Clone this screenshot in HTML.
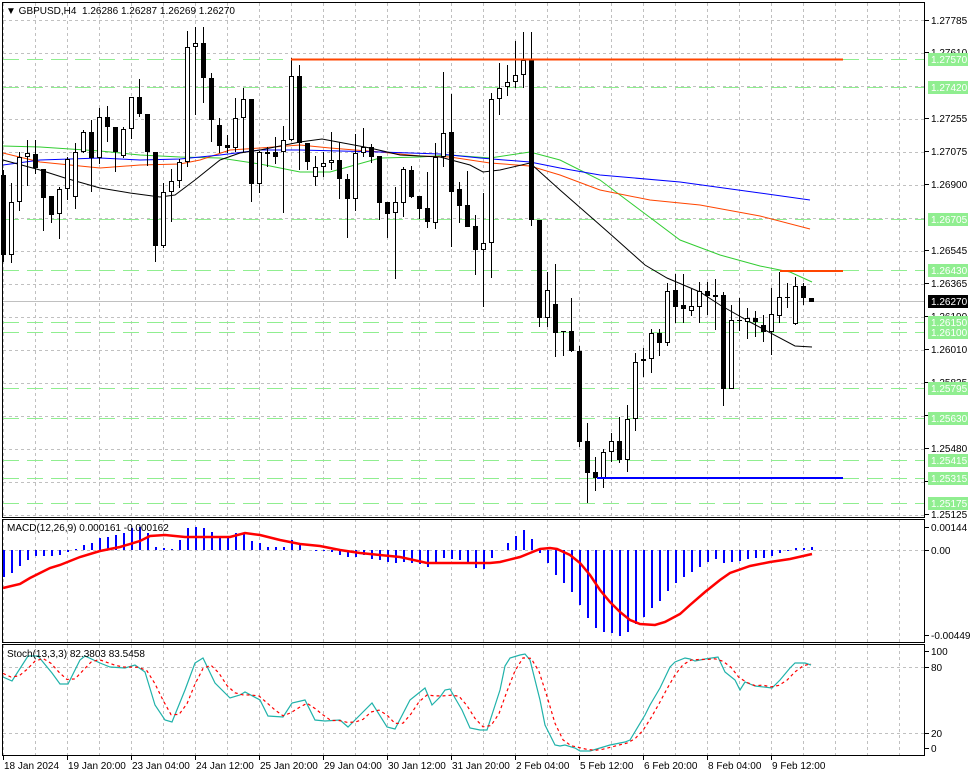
<!DOCTYPE html>
<html><head><meta charset="utf-8"><style>
html,body{margin:0;padding:0;background:#fff;width:971px;height:776px;overflow:hidden}
svg{display:block;font-family:"Liberation Sans",Tahoma,sans-serif;font-size:10px}
</style></head><body>
<svg id="s" width="971" height="776" xmlns="http://www.w3.org/2000/svg"></svg>
<script>
var S=document.getElementById('s'),o='';
function L(x1,y1,x2,y2,c,w,d){o+='<line x1="'+x1+'" y1="'+y1+'" x2="'+x2+'" y2="'+y2+'" stroke="'+c+'" stroke-width="'+(w||1)+'"'+(d?' stroke-dasharray="'+d+'"':'')+' shape-rendering="crispEdges"/>';}
function P(pts,c,w,d){o+='<polyline fill="none" points="'+pts.map(function(p){return p.join(',')}).join(' ')+'" stroke="'+c+'" stroke-width="'+(w||1)+'"'+(d?' stroke-dasharray="'+d+'"':'')+'/>';}
function T(x,y,t,c,extra){o+='<text x="'+x+'" y="'+y+'" fill="'+(c||'#000')+'" '+(extra||'')+'>'+t+'</text>';}
for(var x=3.5;x<925;x+=32){L(x,3,x,517,'#c0c0c0',1,'3,3');L(x,519,x,643,'#c0c0c0',1,'3,3');L(x,645,x,755,'#c0c0c0',1,'3,3');}
for(var y=20.5;y<517;y+=33){L(3,y,925,y,'#c0c0c0',1,'3,3');}
L(3,550.5,925,550.5,'#c0c0c0',1,'3,3');L(3,667.5,925,667.5,'#c0c0c0',1,'3,3');L(3,733.5,925,733.5,'#c0c0c0',1,'3,3');
var G=[[59,'1.27570'],[87,'1.27420'],[219,'1.26705'],[270,'1.26430'],[322,'1.26150'],[332,'1.26100'],[388,'1.25795'],[418,'1.25630'],[460,'1.25415'],[478,'1.25315'],[503,'1.25175']];
G.forEach(function(g){L(3,g[0]+.5,925,g[0]+.5,'#90ee90',1,'16,8');});
L(3,301.5,925,301.5,'#c0c0c0',1);
P([[3,146],[40,147],[100,151],[140,155],[180,157],[220,158],[260,164],[300,172],[330,172],[380,158],[420,157],[450,155],[490,158],[530,152],[560,160],[600,180],[640,210],[680,240],[720,255],[760,266],[790,272],[812,282]],'#32cd32');
P([[3,153],[40,162],[100,168],[140,165],[180,164],[200,160],[230,150],[260,148],[300,145],[330,148],[380,152],[420,156],[450,157],[490,163],[530,166],[560,175],[600,190],[650,200],[700,205],[760,216],[810,229]],'#ff4500');
P([[3,165],[40,160],[100,158],[140,160],[180,159],[220,155],[260,150],[300,150],[380,152],[440,154],[480,158],[530,162],[560,168],[600,175],[680,182],[760,193],[810,200]],'#0000ff');
P([[3,160],[40,170],[65,178],[100,188],[130,193],[160,197],[175,195],[195,180],[220,160],[240,153],[260,150],[300,142],[322,139],[370,148],[400,155],[440,157],[470,165],[483,172],[500,170],[530,163],[560,190],[600,225],[617,240],[645,265],[667,278],[700,292],[720,305],[750,322],[795,346],[812,347]],'#000');
var C=[[175,255,170,262,0],[202,255,183,263,1],[157,202,152,211,1],[153,157,140,186,1],[154,168,140,174,0],[169,198,169,231,0],[196,215,196,223,0],[189,214,187,239,1],[159,189,157,200,1],[152,197,143,209,1],[132,152,130,153,1],[132,158,120,192,0],[117,158,108,164,1],[117,127,106,142,0],[127,152,127,172,0],[129,156,127,158,1],[97,129,97,139,1],[97,114,79,117,0],[114,152,114,166,0],[152,246,152,262,0],[192,246,183,248,1],[181,192,169,222,1],[162,181,159,188,1],[47,162,31,167,1],[43,47,27,115,1],[43,78,27,103,0],[78,120,73,142,0],[125,146,118,153,0],[145,148,135,153,0],[118,148,98,152,1],[99,118,88,152,1],[99,184,99,202,0],[152,184,151,193,1],[152,154,147,167,1],[152,157,137,164,0],[140,152,126,213,1],[76,140,58,141,1],[76,143,65,170,0],[143,162,143,170,0],[167,177,156,186,1],[163,167,152,177,1],[160,163,132,170,1],[160,179,142,199,0],[179,199,174,238,0],[153,199,134,211,1],[147,153,128,157,1],[147,157,144,163,0],[156,203,156,220,0],[202,214,202,238,0],[202,213,187,279,1],[169,203,167,217,1],[170,197,166,198,0],[196,209,196,219,0],[208,222,172,228,0],[157,223,143,229,1],[133,157,72,167,1],[132,192,94,247,0],[189,206,182,223,0],[205,227,171,227,0],[226,250,215,275,0],[243,250,193,307,1],[99,243,93,278,1],[88,99,63,115,1],[82,87,65,96,1],[75,82,41,88,1],[60,75,32,88,1],[59,220,32,226,0],[220,318,220,327,0],[290,318,272,327,1],[304,333,264,357,0],[331,332,331,356,0],[331,351,298,352,0],[351,442,346,447,0],[441,473,423,503,0],[472,478,457,491,0],[452,478,449,488,1],[441,452,433,462,1],[441,460,417,463,0],[419,460,405,472,1],[362,419,353,431,1],[359,361,348,377,1],[333,359,329,373,1],[333,343,329,356,0],[291,343,283,346,1],[290,307,274,323,0],[305,309,274,323,0],[306,311,289,316,1],[291,307,282,323,1],[291,296,282,315,0],[295,297,279,330,0],[295,389,292,406,0],[320,389,305,389,1],[320,321,298,331,0],[318,322,308,339,1],[318,322,311,337,0],[325,332,315,342,0],[314,332,288,355,1],[297,316,272,323,1],[297,298,283,308,0],[286,324,277,325,1],[286,298,283,305,0],[298,302,298,302,0]];
C.forEach(function(c,i){var x=3+8*i;L(x+.5,c[2],x+.5,c[3],'#000',1);
 var h=Math.max(1,c[1]-c[0]);
 if(c[4]) o+='<rect x="'+(x-1.5)+'" y="'+(c[0]+.5)+'" width="4" height="'+(h-1)+'" fill="#fff" stroke="#000" stroke-width="1" shape-rendering="crispEdges"/>';
 else o+='<rect x="'+(x-2)+'" y="'+c[0]+'" width="5" height="'+h+'" fill="#000" shape-rendering="crispEdges"/>';});
L(291,59.5,843,59.5,'#ff4500',2);L(780,271,843,271,'#ff4500',2);L(597,478,843,478,'#0000ff',2);
var H=[27,23,16,10,6,6,6,5,2,-1,-5,-7,-12,-13,-15,-17,-22,-23,-17,-3,-2,-1,-10,-22,-23,-22,-18,-14,-14,-17,-17,-9,-7,-3,-3,-3,-10,-7,0,1,1,2,5,7,7,5,9,10,12,13,12,13,14,17,12,8,9,10,12,18,19,8,0,-7,-14,-20,-11,3,13,25,33,42,55,68,78,82,83,86,82,74,67,58,51,41,33,27,22,17,12,9,13,12,11,9,8,8,6,3,1,-2,-2,-3];
H.forEach(function(v,i){var x=3+8*i+1;if(v!=0)L(x,550,x,550+v,'#0000ff',2);});
P([[3,588],[20,584],[30,578],[40,573],[50,568],[60,565],[70,561],[80,557],[100,551],[120,547],[140,541],[150,536],[165,535],[185,537],[230,537],[245,533],[260,535],[280,540],[300,544],[320,546],[340,550],[360,553],[380,555],[400,557],[427,563],[490,563],[500,562],[520,557],[530,553],[540,549],[550,548],[557,549],[570,555],[580,563],[590,575],[600,590],[610,602],[620,612],[630,620],[640,624],[655,625],[665,622],[680,614],[690,605],[705,592],[720,580],[730,573],[750,566],[770,562],[790,559],[812,554]],'#ff0000',2.5);
var M=[[3,677],[12,681],[28,656],[38,656],[52,673],[60,684],[68,684],[80,660],[85,656],[100,663],[110,667],[125,668],[135,665],[145,672],[155,705],[165,720],[172,722],[185,690],[195,663],[203,658],[215,683],[230,698],[240,695],[245,692],[260,700],[268,716],[283,717],[292,703],[305,700],[315,720],[325,721],[340,720],[348,727],[360,715],[372,703],[387,727],[395,729],[410,700],[420,692],[425,688],[432,705],[440,697],[445,690],[450,689],[455,698],[462,710],[470,728],[480,730],[487,730],[500,690],[505,666],[510,658],[520,655],[525,654],[530,660],[540,700],[545,725],[555,745],[560,746],[565,745],[575,748],[580,751],[590,751],[600,748],[610,745],[625,742],[630,740],[645,715],[650,705],[660,688],[670,667],[675,662],[685,658],[690,659],[695,661],[705,659],[718,657],[725,672],[735,680],[740,690],[745,682],[755,686],[772,688],[780,680],[790,668],[795,663],[805,663],[811,665]];
function at(x){for(var k=1;k<M.length;k++){if(M[k][0]>=x){var a=M[k-1],b=M[k];return a[1]+(b[1]-a[1])*(x-a[0])/(b[0]-a[0]);}}return M[M.length-1][1];}
var sg=[];for(var i=0;i<102;i++){var x=3+8*i;var v=(at(x)+at(x-8)+at(x-16))/3;sg.push([x,v.toFixed(1)]);}
P(M,'#20b2aa',1.2);P(sg,'#ff0000',1.2,'3,3');
o+='<rect x="2.5" y="2.5" width="922" height="515" fill="none" stroke="#000"/>';
o+='<rect x="2.5" y="519.5" width="922" height="123" fill="none" stroke="#000"/>';
o+='<rect x="2.5" y="644.5" width="922" height="111" fill="none" stroke="#000"/>';
var A=[[20,'1.27785'],[52,'1.27610'],[118,'1.27255'],[151,'1.27075'],[184,'1.26900'],[250,'1.26545'],[283,'1.26365'],[316,'1.26190'],[349,'1.26010'],[382,'1.25835'],[415,'1.25655'],[448,'1.25480'],[481,'1.25300'],[514,'1.25125']];
A.forEach(function(a){L(925,a[0]+.5,929,a[0]+.5,'#000');T(931,a[0]+4,a[1]);});
G.forEach(function(g){o+='<rect x="928" y="'+(g[0]-6)+'" width="40" height="13" fill="#90ee90"/>';T(931,g[0]+4,g[1],'#fff');});
o+='<rect x="928" y="295" width="40" height="13" fill="#000"/>';T(931,305,'1.26270','#fff');
[[527,'0.00144'],[550,'0.00'],[635,'-0.00449'],[651,'100'],[667,'80'],[733,'20'],[748,'0']].forEach(function(a){L(925,a[0]+.5,929,a[0]+.5,'#000');T(931,a[0]+4,a[1]);});
T(6,14,'▼ GBPUSD,H4  1.26286 1.26287 1.26269 1.26270','#000','xml:space="preserve"');
T(7,531,'MACD(12,26,9) 0.000161 -0.000162');
T(7,657,'Stoch(13,3,3) 82.3803 83.5458');
var D=['18 Jan 2024','19 Jan 20:00','23 Jan 04:00','24 Jan 12:00','25 Jan 20:00','29 Jan 04:00','30 Jan 12:00','31 Jan 20:00','2 Feb 04:00','5 Feb 12:00','6 Feb 20:00','8 Feb 04:00','9 Feb 12:00'];
D.forEach(function(d,i){var x=3+64*i;L(x+.5,756,x+.5,760,'#000');T(x+1,769,d);});
S.innerHTML=o;
</script>
</body></html>
